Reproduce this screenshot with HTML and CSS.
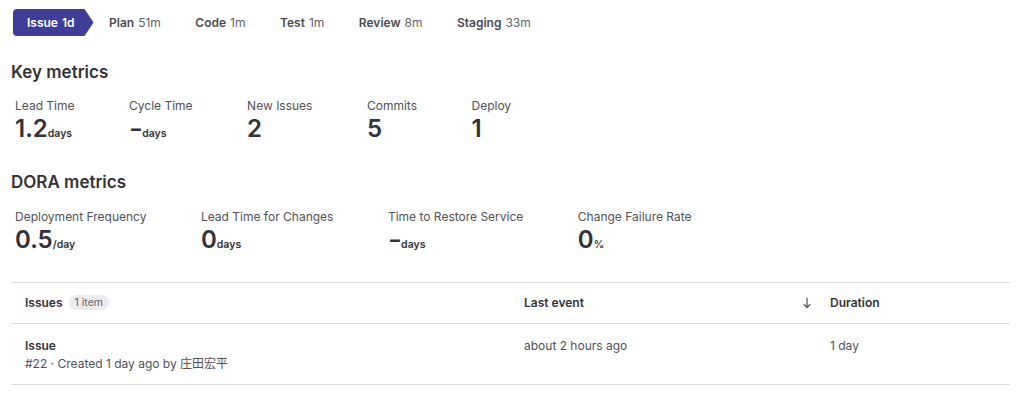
FILE: index.html
```html
<!DOCTYPE html>
<html>
<head>
<meta charset="utf-8">
<link rel="stylesheet" href="styles.css">
</head>
<body>
<div class="page">
  <nav class="stages">
    <div class="stage active"><span class="name">Issue</span> <span class="time">1d</span></div>
    <div class="stage"><span class="name">Plan</span> <span class="time">51m</span></div>
    <div class="stage"><span class="name">Code</span> <span class="time">1m</span></div>
    <div class="stage"><span class="name">Test</span> <span class="time">1m</span></div>
    <div class="stage"><span class="name">Review</span> <span class="time">8m</span></div>
    <div class="stage"><span class="name">Staging</span> <span class="time">33m</span></div>
  </nav>

  <h2 class="section-title key-title">Key metrics</h2>
  <div class="metrics key-metrics">
    <div class="metric"><div class="label">Lead Time</div><div class="value">1.2<span class="unit">days</span></div></div>
    <div class="metric"><div class="label">Cycle Time</div><div class="value"><span class="dash">-</span><span class="unit">days</span></div></div>
    <div class="metric"><div class="label">New Issues</div><div class="value">2</div></div>
    <div class="metric"><div class="label">Commits</div><div class="value">5</div></div>
    <div class="metric"><div class="label">Deploy</div><div class="value">1</div></div>
  </div>

  <h2 class="section-title dora-title">DORA metrics</h2>
  <div class="metrics dora-metrics">
    <div class="metric"><div class="label">Deployment Frequency</div><div class="value">0.5<span class="unit">/day</span></div></div>
    <div class="metric"><div class="label">Lead Time for Changes</div><div class="value">0<span class="unit">days</span></div></div>
    <div class="metric"><div class="label">Time to Restore Service</div><div class="value"><span class="dash">-</span><span class="unit">days</span></div></div>
    <div class="metric"><div class="label">Change Failure Rate</div><div class="value">0<span class="unit">%</span></div></div>
  </div>

  <div class="table">
    <div class="row head">
      <div class="cell c1">Issues <span class="badge">1 item</span></div>
      <div class="cell c2">Last event</div>
      <div class="cell c3"><svg class="sort" width="8" height="12" viewBox="0 0 8 12"><path d="M4 1v9.5M1 7.5l3 3 3-3" fill="none" stroke="#535158" stroke-width="1.2" stroke-linecap="round" stroke-linejoin="round"/></svg>Duration</div>
    </div>
    <div class="row body">
      <div class="cell c1">
        <div class="issue-title">Issue</div>
        <div class="issue-meta">#22 · Created 1 day ago by 庄田宏平</div>
      </div>
      <div class="cell c2 muted">about 2 hours ago</div>
      <div class="cell c3 muted">1 day</div>
    </div>
  </div>
</div>
</body>
</html>
```

FILE: styles.css
```css
* { box-sizing: border-box; }
body {
  margin: 0;
  background: #fff;
  font-family: Inter, "Noto Sans", "Noto Sans CJK JP", sans-serif;
  color: #333238;
  font-size: 12px;
}
.page { padding: 0 14px 0 11px; }

.stages {
  display: flex;
  gap: 1.5px;
  padding-top: 9px;
  margin-left: 2px;
}
.stage {
  height: 27px;
  display: flex;
  align-items: center;
  gap: 4px;
  padding: 0 19px 0 14px;
  font-size: 12px;
  color: #626168;
}
.stage .name { font-weight: 600; color: #4c4b51; }
.stage.active {
  background: #3e3e98;
  color: #fff;
  border-radius: 4px 0 0 4px;
  clip-path: polygon(0 0, calc(100% - 9px) 0, 100% 50%, calc(100% - 9px) 100%, 0 100%);
}
.stage.active .name, .stage.active .time { color: #fff; font-weight: 600; }

.section-title {
  margin: 0;
  font-size: 17px;
  line-height: 24px;
  font-weight: 600;
  color: #333238;
}
.key-title { margin-top: 24px; }
.dora-title { margin-top: 22px; }

.metrics {
  display: flex;
  gap: 54.5px;
  padding-left: 4px;
}
.key-metrics { margin-top: 13px; }
.dora-metrics { margin-top: 14px; }
.metric .label {
  font-size: 12px;
  line-height: 18px;
  color: #535158;
}
.metric .value {
  font-size: 24px;
  line-height: 28px;
  font-weight: 600;
  color: #333238;
}
.metric .dash {
  display: inline-block;
  transform: scaleX(1.25);
  transform-origin: left center;
  margin-right: 2px;
}
.metric .unit {
  font-size: 10.5px;
  font-weight: 600;
}

.table {
  margin-top: 23px;
  border-top: 1px solid #dcdcde;
}
.row {
  display: flex;
  border-bottom: 1px solid #dcdcde;
}
.row.head { height: 41px; align-items: center; font-weight: 600; }
.row.body { height: 61px; align-items: flex-start; padding-top: 13px; }
.cell { padding-left: 14px; line-height: 18px; }
.c1 { width: 499px; }
.c2 { width: 280px; }
.c3 { flex: 1; display: flex; align-items: center; padding-left: 40px; }
.badge {
  display: inline-block;
  font-size: 10.5px;
  font-weight: 400;
  color: #626168;
  background: #ececef;
  border-radius: 8px;
  padding: 0 6px;
  line-height: 15px;
  margin-left: 3px;
  vertical-align: 1px;
}
.sort {
  display: block;
  flex: none;
  margin-left: -27px;
  margin-right: 19px;
}
.issue-title { font-weight: 600; }
.issue-meta { color: #535158; }
.muted { color: #535158; }
```
